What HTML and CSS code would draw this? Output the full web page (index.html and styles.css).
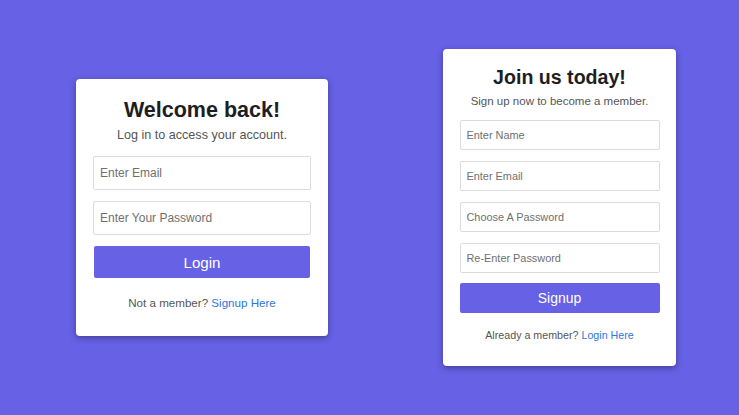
FILE: index.html
```html
<!DOCTYPE html>
<html lang="en">
<head>
<meta charset="utf-8">
<title>Login / Signup</title>
<link rel="stylesheet" href="styles.css">
</head>
<body>
<main class="page">
  <section class="card card-login">
    <h1 class="title">Welcome back!</h1>
    <p class="subtitle">Log in to access your account.</p>
    <form class="form">
      <input class="field" type="email" placeholder="Enter Email">
      <input class="field" type="password" placeholder="Enter Your Password">
      <button class="btn" type="button">Login</button>
    </form>
    <p class="footer">Not a member? <a href="#" class="link">Signup Here</a></p>
  </section>
  <section class="card card-signup">
    <h1 class="title">Join us today!</h1>
    <p class="subtitle">Sign up now to become a member.</p>
    <form class="form">
      <input class="field" type="text" placeholder="Enter Name">
      <input class="field" type="email" placeholder="Enter Email">
      <input class="field" type="password" placeholder="Choose A Password">
      <input class="field" type="password" placeholder="Re-Enter Password">
      <button class="btn" type="button">Signup</button>
    </form>
    <p class="footer">Already a member? <a href="#" class="link">Login Here</a></p>
  </section>
</main>
</body>
</html>
```

FILE: styles.css
```css
* { box-sizing: border-box; }
html, body { margin: 0; padding: 0; }
body {
  background: #6661e5;
  font-family: "Liberation Sans", Arial, sans-serif;
}
.page {
  height: 415px;
  display: flex;
  align-items: center;
  padding-left: 76px;
  gap: 115px;
}
.card {
  background: #fff;
  border-radius: 4px;
  box-shadow: 0 2px 6px rgba(0, 0, 0, 0.35);
  text-align: center;
}
.title, .subtitle, .footer { margin: 0; }
.title { color: #1e1e1e; font-weight: bold; }
.subtitle { color: #555; }
.form { display: flex; flex-direction: column; }
.field {
  display: block;
  width: 100%;
  border: 1px solid #dcdcdc;
  border-radius: 2px;
  font-family: inherit;
  color: #333;
  background: #fff;
  outline: none;
  margin: 0;
}
.field::placeholder { color: #6f6f6f; }
.btn {
  display: block;
  width: 100%;
  border: none;
  border-radius: 2px;
  background: #6761e6;
  color: #fff;
  font-family: inherit;
  margin: 0;
  padding: 0;
  cursor: pointer;
}
.footer { color: #555; }
.link { color: #2877e3; text-decoration: none; }

/* Login card */
.card-login {
  width: 252px;
  padding: 18px 17px 26px;
}
.card-login .title { font-size: 21.5px; line-height: 26px; }
.card-login .subtitle { font-size: 12.6px; line-height: 16px; margin-top: 4px; }
.card-login .form { margin-top: 13px; gap: 11.5px; }
.card-login .field { height: 33.4px; padding: 0 6px; font-size: 12px; }
.card-login .btn { height: 32px; font-size: 15.1px; margin-left: 1px; width: calc(100% - 2px); }
.card-login .footer { font-size: 11.6px; line-height: 14px; margin-top: 17.7px; }

/* Signup card */
.card-signup {
  width: 233px;
  padding: 16.5px 16.5px 24.5px;
}
.card-signup .title { font-size: 19.6px; line-height: 24px; }
.card-signup .subtitle { font-size: 11.5px; line-height: 14px; margin-top: 4.5px; }
.card-signup .form { margin-top: 12.3px; gap: 10.5px; }
.card-signup .field { height: 30.4px; padding: 0 6px; font-size: 10.9px; }
.card-signup .btn { height: 29.6px; font-size: 13.9px; }
.card-signup .footer { font-size: 10.7px; line-height: 13px; margin-top: 15.8px; }
```
